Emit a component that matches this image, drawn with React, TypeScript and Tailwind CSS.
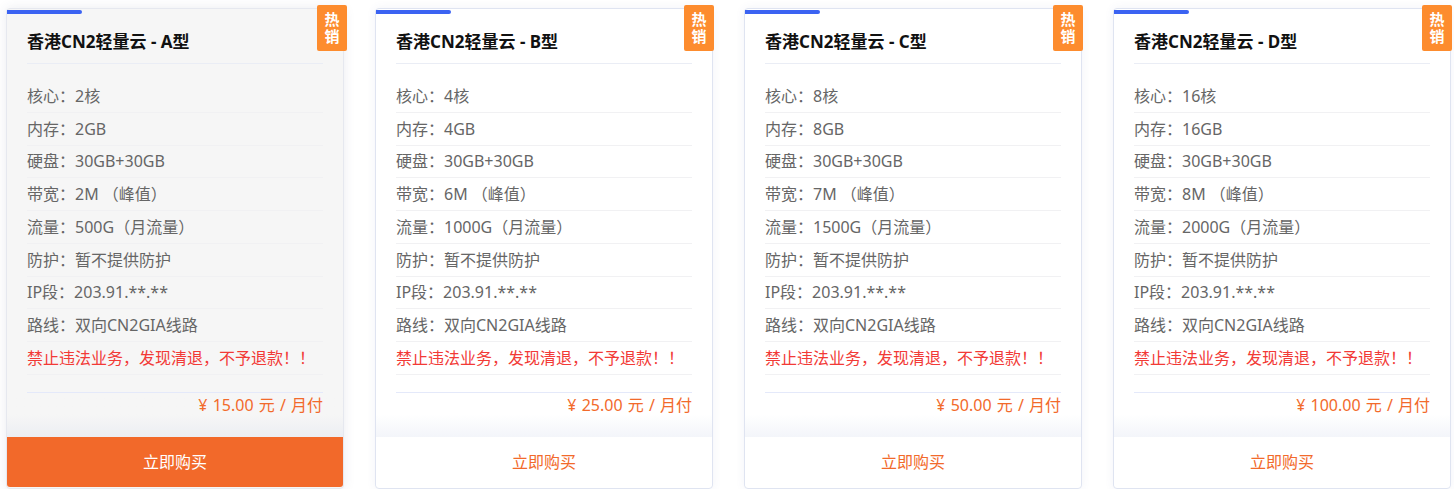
type Plan = {
	name: string;
	cores: string;
	ram: string;
	bandwidth: string;
	traffic: string;
	price: string;
	active?: boolean;
};

const plans: Plan[] = [
	{ name: "A", cores: "2核", ram: "2GB", bandwidth: "2M", traffic: "500G", price: "15.00", active: true },
	{ name: "B", cores: "4核", ram: "4GB", bandwidth: "6M", traffic: "1000G", price: "25.00" },
	{ name: "C", cores: "8核", ram: "8GB", bandwidth: "7M", traffic: "1500G", price: "50.00" },
	{ name: "D", cores: "16核", ram: "16GB", bandwidth: "8M", traffic: "2000G", price: "100.00" },
];

function Row({ children, red }: { children: React.ReactNode; red?: boolean }) {
	return (
		<li
			className={`h-[32.75px] flex items-center border-b border-[#f1f1f3] ${
				red ? "text-[#f23a36]" : "text-[#666]"
			}`}>
			{children}
		</li>
	);
}

function PlanCard({ plan }: { plan: Plan }) {
	const active = plan.active;
	return (
		<div
			className={`relative w-[338px] shrink-0 flex flex-col border rounded-[4px] ${
				active ?
					"bg-[#f6f6f6] border-[#e6e8ef] shadow-[0_0_12px_rgba(60,70,110,0.1)]"
				:	"bg-white border-[#dfe4f1] shadow-[0_0_10px_rgba(70,90,160,0.07)]"
			}`}>
			<div className="absolute top-[1px] left-0 w-[75px] h-[4px] bg-[#3b63f2] rounded-r-[2px]" />
			<div
				className={`absolute -top-[4px] ${
					active ? "-right-[4px]" : "-right-[2px]"
				} w-[30px] h-[46px] bg-[#fd8c2e] flex items-center justify-center rounded-[2px]`}>
				<span className="block w-[16px] text-white font-bold text-[15px] leading-[17px] text-center">
					热销
				</span>
			</div>

			<div className="px-[20px]">
				<h3 className="pt-[21px] pb-[9px] leading-[24px] text-[17px] font-bold text-[#111] border-b border-[#eaedf5]">
					香港CN2轻量云 - {plan.name}型
				</h3>
				<ul className="pt-[16px] text-[16px]">
					<Row>核心：{plan.cores}</Row>
					<Row>内存：{plan.ram}</Row>
					<Row>硬盘：30GB+30GB</Row>
					<Row>带宽：{plan.bandwidth} （峰值）</Row>
					<Row>流量：{plan.traffic}（月流量）</Row>
					<Row>防护：暂不提供防护</Row>
					<Row>IP段：203.91.**.**</Row>
					<Row>路线：双向CN2GIA线路</Row>
					<Row red>禁止违法业务，发现清退，不予退款！！</Row>
				</ul>
			</div>

			<div
				className={`mt-[17px] ${
					active ?
						"bg-linear-to-b from-[#f6f6f6] via-[#f6f6f6] to-[#eceef3]"
					:	"bg-linear-to-b from-white via-white to-[#f3f5fa]"
				}`}>
				<div className="mx-[20px] border-t border-[#e4e9fa] pb-[20px] text-right text-[16px] leading-[24px] text-[#f26a2b] [word-spacing:1px]">
					¥ {plan.price} 元 / 月付
				</div>
			</div>

			<button
				className={`h-[50px] w-full text-[16px] rounded-b-[3px] cursor-pointer ${
					active ? "bg-[#f2692a] text-white" : "bg-white text-[#f26a2b]"
				}`}>
				立即购买
			</button>
		</div>
	);
}

export default function App() {
	return (
		<div
			className="min-h-screen bg-white pt-[8px] pl-[6px] flex gap-[31px]"
			style={{ fontFamily: '"Noto Sans", "Noto Sans CJK SC", sans-serif' }}>
			{plans.map((p) => (
				<PlanCard key={p.name} plan={p} />
			))}
		</div>
	);
}
